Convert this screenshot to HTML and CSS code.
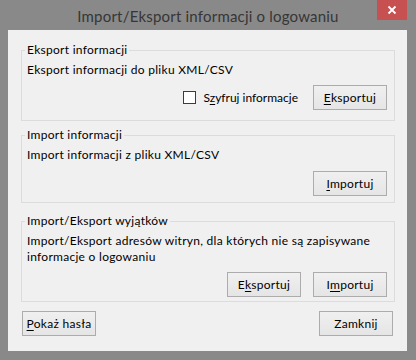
FILE: index.html
```html
<!DOCTYPE html>
<html lang="pl">
<head>
<meta charset="utf-8">
<title>Import/Eksport informacji o logowaniu</title>
<link rel="stylesheet" href="styles.css">
</head>
<body>
<div class="window">
  <div class="titlebar">
    <span class="title">Import/Eksport informacji o logowaniu</span>
    <div class="close" aria-label="Zamknij">
      <svg width="10" height="10" viewBox="0 0 10 10"><path d="M1.5 1.5 L8.5 8.5 M8.5 1.5 L1.5 8.5" stroke="#fff" stroke-width="1.8" fill="none"/></svg>
    </div>
  </div>
  <div class="client">
    <fieldset class="group g1">
      <legend>Eksport informacji</legend>
      <p class="desc">Eksport informacji do pliku XML/CSV</p>
      <div class="actions">
        <label class="check"><span class="box"></span><span class="check-label">S<u>z</u>yfruj informacje</span></label>
        <button class="btn"><u>E</u>ksportuj</button>
      </div>
    </fieldset>
    <fieldset class="group g2">
      <legend>Import informacji</legend>
      <p class="desc">Import informacji z pliku XML/CSV</p>
      <div class="actions">
        <button class="btn"><u>I</u>mportuj</button>
      </div>
    </fieldset>
    <fieldset class="group g3">
      <legend>Import/Eksport wyjątków</legend>
      <p class="desc">Import/Eksport adresów witryn, dla których nie są zapisywane<br>informacje o logowaniu</p>
      <div class="actions">
        <button class="btn">E<u>k</u>sportuj</button>
        <button class="btn">I<u>m</u>portuj</button>
      </div>
    </fieldset>
    <div class="footer">
      <button class="btn"><u>P</u>okaż hasła</button>
      <button class="btn">Zamknij</button>
    </div>
  </div>
</div>
</body>
</html>
```
FILE: styles.css
```css
* { box-sizing: border-box; }
html, body { margin: 0; padding: 0; }
body {
  width: 416px;
  height: 360px;
  background: #888888;
  font-family: "Lato", "Liberation Sans", sans-serif;
  font-size: 12px;
  letter-spacing: 0.28px;
  color: #000;
}
.window {
  width: 416px;
  height: 360px;
  background: #898989;
  display: flex;
  flex-direction: column;
}
.titlebar {
  position: relative;
  height: 30px;
  display: flex;
  align-items: center;
  justify-content: center;
}
.title {
  font-size: 15px;
  letter-spacing: 0.2px;
  color: #363636;
  line-height: 20px;
  margin-top: 1px;
}
.close {
  position: absolute;
  top: 0;
  left: 377px;
  width: 30px;
  height: 20px;
  background: #c75050;
  display: flex;
  align-items: center;
  justify-content: center;
}
.client {
  margin: 0 9px 0 8px;
  height: 321px;
  background: #f0f0f0;
  padding: 12px 12px 0 13px;
  display: flex;
  flex-direction: column;
}
.group {
  margin: 0;
  border: 1px solid #dcdcdc;
  padding: 4px 7px 0 5px;
  min-width: 0;
}
.group legend {
  padding: 0 2px;
  margin-left: -2px;
  line-height: 16px;
}
.desc {
  margin: 0;
  line-height: 16px;
}
.actions {
  display: flex;
  justify-content: flex-end;
  align-items: center;
  gap: 12px;
}
.g1 .actions { margin-top: 7px; padding-bottom: 10px; }
.g2 { margin-top: 6px; }
.g2 .actions { margin-top: 8px; padding-bottom: 6px; }
.g3 { margin-top: 10px; }
.g3 .actions { margin-top: 7px; padding-bottom: 4px; }
.check {
  display: flex;
  align-items: center;
  gap: 7px;
  margin-right: 3px;
}
.check-label { letter-spacing: 0; }
.box {
  width: 13px;
  height: 13px;
  border: 1px solid #3c3c3c;
  background: #fff;
}
.btn {
  width: 74px;
  height: 25px;
  border: 1px solid #acacac;
  background: linear-gradient(#f0f0f0, #e5e5e5);
  font: inherit;
  letter-spacing: 0.28px;
  color: #000;
  padding: 0;
  margin: 0;
}
u { text-underline-offset: 2px; }
.footer {
  margin-top: 9px;
  display: flex;
  justify-content: space-between;
  padding-left: 1px;
  padding-right: 2px;
}
```
